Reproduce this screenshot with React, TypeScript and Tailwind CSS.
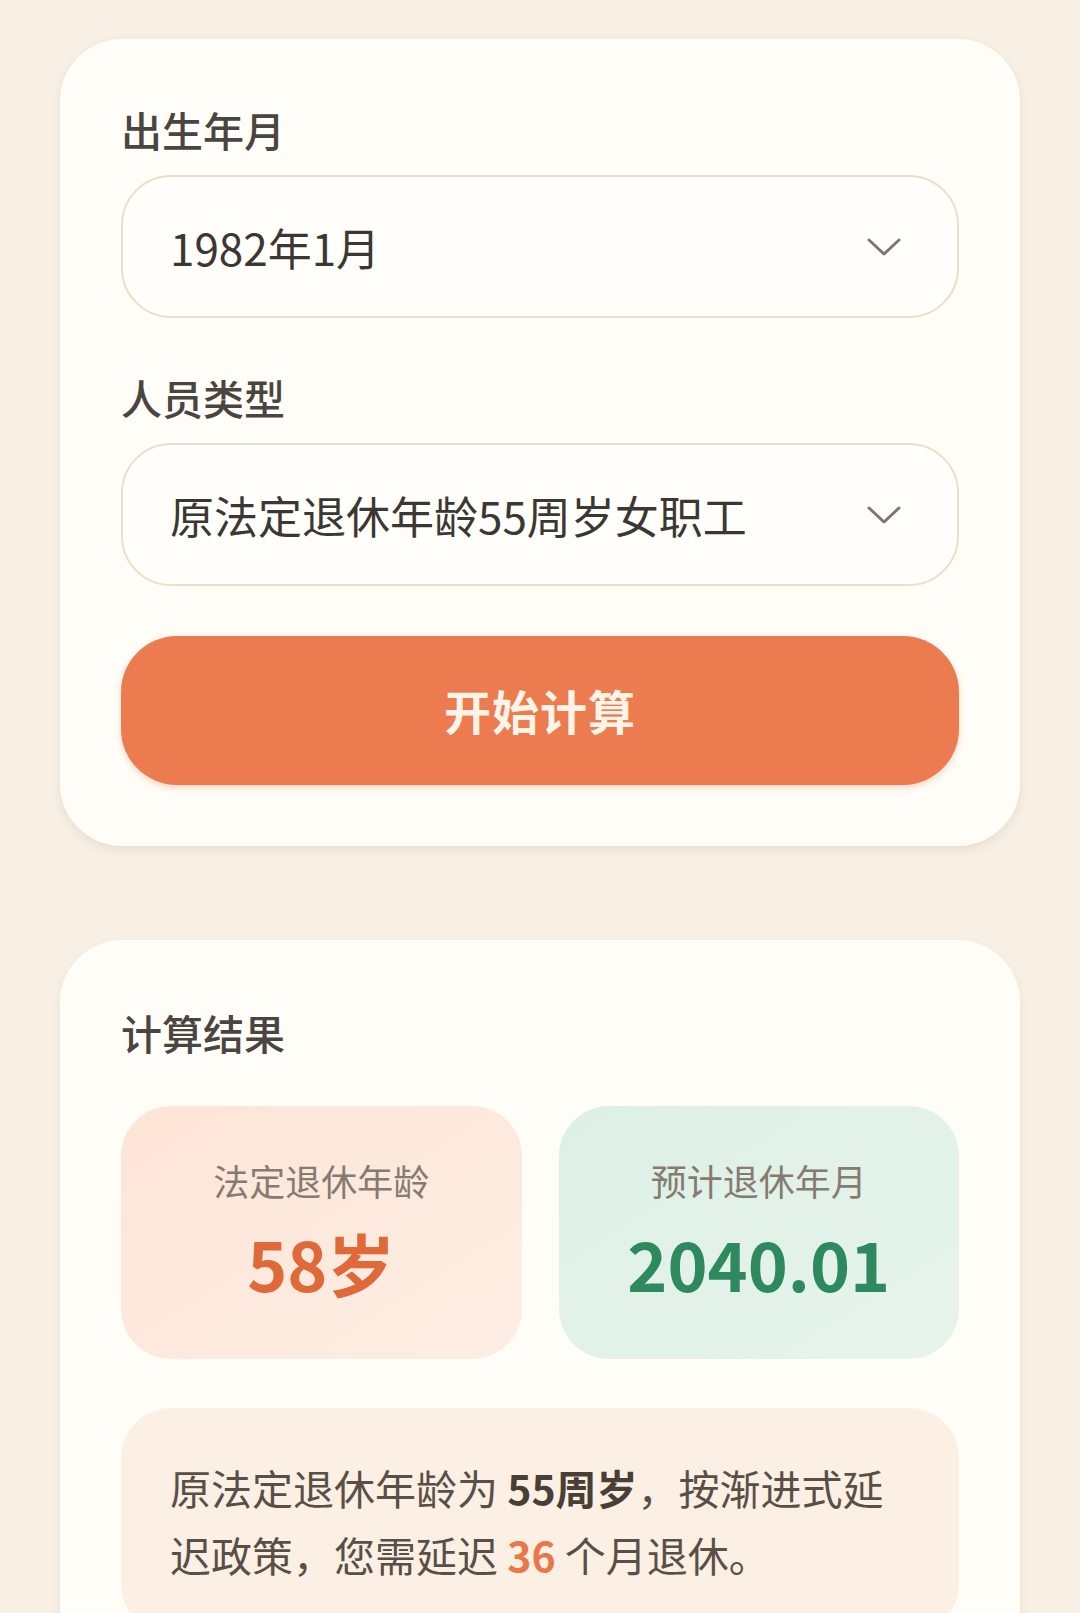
import React from 'react';

const font = { fontFamily: '"Noto Sans CJK SC", "Noto Sans", sans-serif' };

function Chevron() {
  return (
    <svg width="34" height="20" viewBox="0 0 34 20" fill="none" className="shrink-0">
      <polyline points="2,3 17,17 32,3" stroke="#7b7770" strokeWidth="3" strokeLinecap="round" strokeLinejoin="round" />
    </svg>
  );
}

function SelectBox({ value }: { value: string }) {
  return (
    <div className="flex items-center justify-between h-[143px] rounded-[50px] border-2 border-[#e6e1cb] bg-[#fffefa] pl-[47px] pr-[56px]">
      <span className="text-[44px] leading-none text-[#3b3733]">{value}</span>
      <Chevron />
    </div>
  );
}

export default function App() {
  return (
    <div className="h-[1613px] overflow-hidden bg-[#f8f0e5] px-[60px] pt-[39px]" style={font}>
      {/* form card */}
      <section className="rounded-[62px] bg-[#fffdf7] px-[61px] pt-[66px] pb-[61px] shadow-[0_4px_10px_rgba(190,170,140,0.25)]">
        <div className="text-[41px] leading-[48px] font-medium text-[#4a4540]">出生年月</div>
        <div className="mt-[22px]">
          <SelectBox value="1982年1月" />
        </div>
        <div className="mt-[55px] text-[41px] leading-[48px] font-medium text-[#4a4540]">人员类型</div>
        <div className="mt-[22px]">
          <SelectBox value="原法定退休年龄55周岁女职工" />
        </div>
        <button className="mt-[50px] flex h-[149px] w-full items-center justify-center rounded-[56px] bg-[#ec7b4f] text-[47px] font-bold tracking-[1px] text-[#fff4e8] shadow-[0_3px_6px_rgba(200,110,70,0.25)]">
          开始计算
        </button>
      </section>

      {/* result card */}
      <section className="mt-[94px] rounded-[62px] bg-[#fffdf7] px-[61px] pt-[68px] pb-[60px] shadow-[0_4px_10px_rgba(190,170,140,0.2)]">
        <div className="text-[41px] leading-[48px] font-medium text-[#4a4540]">计算结果</div>
        <div className="mt-[50px] grid grid-cols-2 gap-[37px]">
          <div className="flex h-[253px] flex-col items-center rounded-[50px] bg-gradient-to-br from-[#fde5d7] to-[#fdeee3] pt-[53px]">
            <div className="text-[36px] leading-[42px] text-[#857b71]">法定退休年龄</div>
            <div className="mt-[17px] text-[68px] leading-[90px] font-bold text-[#e0693a]">58岁</div>
          </div>
          <div className="flex h-[253px] flex-col items-center rounded-[50px] bg-gradient-to-br from-[#ddf0e5] to-[#e7f4eb] pt-[53px]">
            <div className="text-[36px] leading-[42px] text-[#857b71]">预计退休年月</div>
            <div className="mt-[17px] text-[68px] leading-[90px] font-bold text-[#2e8a5e]">2040.01</div>
          </div>
        </div>
        <div className="mt-[49px] rounded-[50px] bg-[#fcefe4] px-[49px] pt-[46px] pb-[46px]">
          <p className="text-[41px] leading-[67px] text-[#5a4f46]">
            原法定退休年龄为 <span className="font-semibold text-[#4a3f36]">55周岁</span>，按渐进式延迟政策，您需延迟{' '}
            <span className="font-bold text-[#e8784a]">36</span> 个月退休。
          </p>
        </div>
      </section>
    </div>
  );
}
